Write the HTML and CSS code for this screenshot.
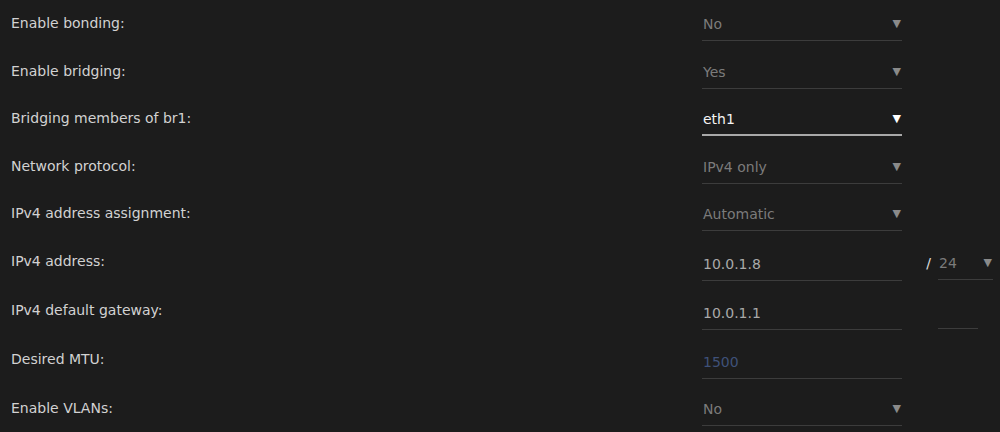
FILE: index.html
```html
<!DOCTYPE html>
<html lang="en">
<head>
    <meta charset="UTF-8">
    <meta name="viewport" content="width=device-width, initial-scale=1.0">
    <title>Interface settings</title>
    <link rel="stylesheet" href="styles.css">
</head>
<body>
    <div id="settingsForm">
        <div class="row">
            <div class="label">Enable bonding:</div>
            <div class="field select disabled"><span>No</span><span class="arrow">&#9660;</span></div>
        </div>
        <div class="row">
            <div class="label">Enable bridging:</div>
            <div class="field select disabled"><span>Yes</span><span class="arrow">&#9660;</span></div>
        </div>
        <div class="row">
            <div class="label">Bridging members of br1:</div>
            <div class="field select active"><span>eth1</span><span class="arrow">&#9660;</span></div>
        </div>
        <div class="row">
            <div class="label">Network protocol:</div>
            <div class="field select disabled"><span>IPv4 only</span><span class="arrow">&#9660;</span></div>
        </div>
        <div class="row">
            <div class="label">IPv4 address assignment:</div>
            <div class="field select disabled"><span>Automatic</span><span class="arrow">&#9660;</span></div>
        </div>
        <div class="row textRow">
            <div class="label">IPv4 address:</div>
            <div class="field text"><span>10.0.1.8</span></div>
            <div class="slash">/</div>
            <div class="field select small disabled"><span>24</span><span class="arrow">&#9660;</span></div>
        </div>
        <div class="row textRow">
            <div class="label">IPv4 default gateway:</div>
            <div class="field text"><span>10.0.1.1</span></div>
            <div class="slash"></div>
            <div class="field text small blank"></div>
        </div>
        <div class="row textRow">
            <div class="label">Desired MTU:</div>
            <div class="field text placeholder"><span>1500</span></div>
        </div>
        <div class="row">
            <div class="label">Enable VLANs:</div>
            <div class="field select disabled"><span>No</span><span class="arrow">&#9660;</span></div>
        </div>
    </div>
</body>
</html>
```

FILE: styles.css
```css
body {
    background-color: #1c1c1c;
    color: #d2d2d2;
    font-family: 'DejaVu Sans', sans-serif;
    font-size: 14px;
    margin: 0;
}
#settingsForm {
    padding-left: 11px;
}
.row {
    display: grid;
    grid-template-columns: 691px 200px 36px 55px;
    align-items: start;
    height: 47.5px;
}
.row.textRow {
    height: 49px;
}
.label {
    padding-top: 13px;
    line-height: 20px;
}
.field {
    display: flex;
    justify-content: space-between;
    align-items: flex-start;
    box-sizing: border-box;
    height: 41px;
    padding: 14px 1px 0 1px;
    line-height: 20px;
    border-bottom: 1px solid #3c3c3c;
    color: #a9a9a9;
}
.field.text {
    height: 43.5px;
    padding-top: 16px;
}
.field.disabled {
    color: #7b7b7b;
}
.field.active {
    color: #f4f4f4;
    border-bottom: 2px solid #a8a8a8;
}
.field.placeholder {
    color: #3f5179;
}
.arrow {
    font-size: 11px;
    color: #8a8a8a;
}
.field.active .arrow {
    color: #ffffff;
}
.field.small {
    height: 42px;
    padding-top: 15px;
}
.field.small.blank {
    width: 40px;
}
.slash {
    padding-top: 15px;
    line-height: 20px;
    text-align: right;
    padding-right: 7px;
    color: #e0e0e0;
}
```
